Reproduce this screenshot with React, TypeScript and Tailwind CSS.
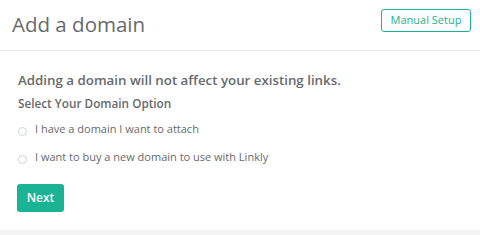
import React, { useState } from 'react';

const options = [
  { id: 'attach', label: 'I have a domain I want to attach' },
  { id: 'buy', label: 'I want to buy a new domain to use with Linkly' },
];

const App = () => {
  const [choice, setChoice] = useState<string | null>(null);

  return (
    <div
      className="w-[480px] h-[235px] bg-white text-[#676a6c] flex flex-col"
      style={{ fontFamily: '"Open Sans", "Liberation Sans", sans-serif' }}
    >
      {/* Header */}
      <div className="h-[51px] shrink-0 flex items-start justify-between pl-3 pr-[9px] border-b border-[#e7eaec]">
        <h1 className="mt-[12px] text-[20.5px] font-normal leading-[24px]">Add a domain</h1>
        <button className="mt-[9px] h-[23px] w-[90px] text-[11px] text-[#1ab394] border border-[#1ab394] rounded-[3px] bg-white">
          Manual Setup
        </button>
      </div>

      {/* Body */}
      <div className="flex-1 px-[18px] pt-[19px]">
        <h3 className="text-[13.3px] font-semibold leading-[20px]">
          Adding a domain will not affect your existing links.
        </h3>
        <p className="mt-[5px] text-[11.75px] font-semibold leading-[16px]">Select Your Domain Option</p>

        <div className="mt-[10px] flex flex-col gap-[12px]">
          {options.map((opt) => (
            <label key={opt.id} className="flex items-center gap-[8px] text-[11px] leading-[16px] cursor-pointer">
              <input
                type="radio"
                name="domain"
                checked={choice === opt.id}
                onChange={() => setChoice(opt.id)}
                className="w-[9px] h-[9px] mt-[4px] appearance-none rounded-full border border-[#cfd3d6] bg-white"
              />
              <span>{opt.label}</span>
            </label>
          ))}
        </div>

        <button className="mt-[19px] -ml-px h-[28px] w-[47px] text-[12px] font-semibold text-white bg-[#1ab394] rounded-[3px]">
          Next
        </button>
      </div>

      <div className="h-[5px] shrink-0 bg-[#f3f3f4]" />
    </div>
  );
};

export default App;
